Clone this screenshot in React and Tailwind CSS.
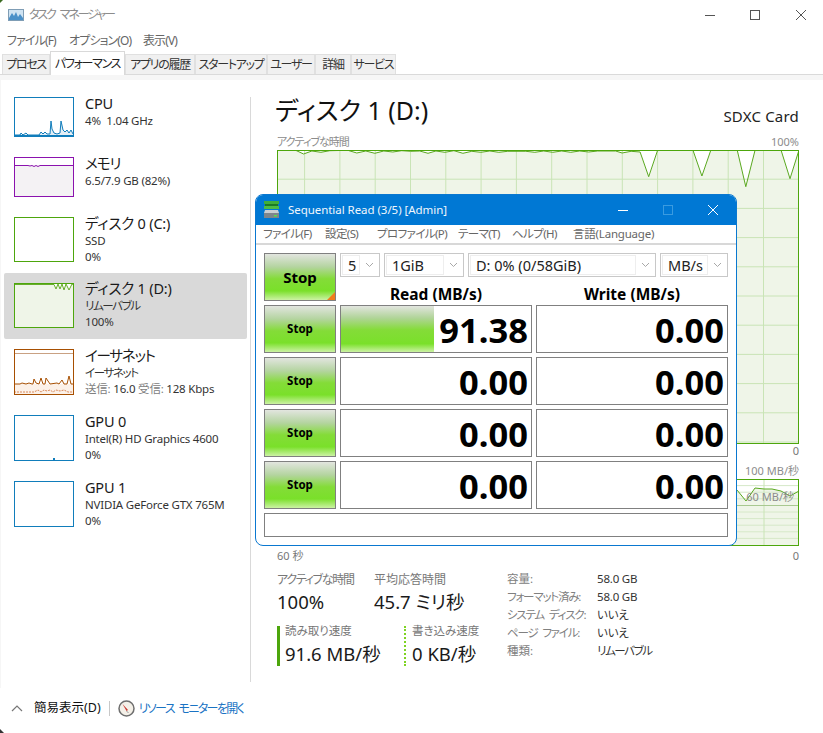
const fontCls = "font-['Noto_Sans','Noto_Sans_CJK_JP',sans-serif] [font-feature-settings:'palt']";
const stopBg = 'bg-[linear-gradient(180deg,#e2e5df_0%,#b4d4a0_28%,#84dc38_54%,#7ae02a_80%,#ccf2a4_100%)]';
const barBg = 'bg-[linear-gradient(180deg,#e2e5df_0%,#b0d498_26%,#84dc38_52%,#7ae02a_82%,#ccf2a4_100%)]';

const tabs = [
  { label: 'プロセス', w: 'w-[48px]' },
  { label: 'パフォーマンス', w: 'w-[75px]', active: true },
  { label: 'アプリの履歴', w: 'w-[70px]' },
  { label: 'スタートアップ', w: 'w-[72px]' },
  { label: 'ユーザー', w: 'w-[48px]' },
  { label: '詳細', w: 'w-[36px]' },
  { label: 'サービス', w: 'w-[45px]' },
];

const mainLine = [
  [48,180],[100,181],[122,192],[145,183],[170,187],[195,182],[245,181],[270,189],[295,183],[320,190],[345,183],[370,186],[395,182],[420,184],[445,183],[468,190],[490,183],[515,187],[540,182],[565,190],[590,184],[615,187],[640,183],[665,187],[690,184],[740,184],[765,187],[790,183],[815,187],[840,183],[865,187],[890,183],[915,186],[940,183],[990,183],[1008,189],[1033,184],[1058,186],[1082,260],[1107,180],[1205,180],[1230,258],[1255,180],[1328,180],[1352,290],[1378,180],[1450,180],[1475,266],[1500,180],
].map(([x, y]) => `${((x - 48) * 0.3595).toFixed(1)},${((y - 180) / 3).toFixed(1)}`).join(' ');

const MainGraph = () => {
  const vs = [];
  for (let x = 486.5; x > 0; x -= 35.3) vs.push(x);
  const hs = [];
  for (let y = 29.2; y < 293; y += 29.2) hs.push(y);
  return (
    <svg width="522" height="294" className="block shrink-0">
      <polygon points={`0,294 ${mainLine} 522,294`} fill="#eff5e8" />
      {vs.map(x => <line key={x} x1={x} x2={x} y1="0" y2="294" stroke="#c9e4b6" />)}
      {hs.map(y => <line key={y} x1="0" x2="522" y1={y} y2={y} stroke="#c9e4b6" />)}
      <polyline points={mainLine} fill="none" stroke="#5aa820" strokeWidth="1" />
      <rect x="0.5" y="0.5" width="521" height="293" fill="none" stroke="#4da60c" />
    </svg>
  );
};

const SpeedGraph = () => (
  <svg width="522" height="67" className="block shrink-0">
    <polygon points="440,67 460,11 469,22 478,9 487,10 495,10 504,12 513,17 522,12 522,67" fill="#eff5e8" />
    {[6.6, 13.2, 19.8, 33, 39.6, 46.2, 52.8, 59.4].map(y => <line key={y} x1="0" x2="522" y1={y} y2={y} stroke="#d6e8c8" />)}
    <line x1="487" x2="487" y1="0" y2="67" stroke="#c9e4b6" />
    <line x1="0" x2="522" y1="26.5" y2="26.5" stroke="#a8c890" />
    <polyline points="460,11 469,22 478,9 487,10 495,10 504,12 513,17 522,12" fill="none" stroke="#5aa820" />
    <rect x="0.5" y="0.5" width="521" height="66" fill="none" stroke="#4da60c" />
  </svg>
);

const Thumb = ({ h, color, children }) => (
  <svg width="60" height={h} className="block shrink-0">
    {children}
    <rect x="0.5" y="0.5" width="59" height={h - 1} fill="none" stroke={color} />
  </svg>
);

const CpuThumb = () => (
  <Thumb h={40} color="#117dbb">
    <polygon points="0,40 0,38 6,38 7,36 9,38 12,36 14,38 25,38 27,35 29,37 31,35 33,37 36,37 37,24 38,32 40,36 43,37 46,36 47,24 49,33 51,35 53,33 55,36 57,33 59,37 60,40" fill="#e3eef6" />
    <polyline points="0,38 6,38 7,36 9,38 12,36 14,38 25,38 27,35 29,37 31,35 33,37 36,37 37,24 38,32 40,36 43,37 46,36 47,24 49,33 51,35 53,33 55,36 57,33 59,37" fill="none" stroke="#117dbb" />
    <rect x="0" y="38" width="60" height="2" fill="#117dbb" />
  </Thumb>
);

const MemThumb = () => (
  <Thumb h={40} color="#8b12ae">
    <rect x="0" y="8" width="60" height="32" fill="#f4f2f4" />
    <polyline points="0,8.5 14,8.5 16,9 18,8.5 20,9.5 22,8.5 24,9.5 26,8.5 60,8.5" fill="none" stroke="#8b12ae" />
  </Thumb>
);

const DiskIdleThumb = () => <Thumb h={45} color="#4da60c" />;

const DiskBusyThumb = () => (
  <Thumb h={45} color="#4da60c">
    <rect x="0" y="0" width="60" height="45" fill="#eff5e8" />
    <polygon points="40,1 42,6 44,1 46,6 48,1 50,7 52,1 55,7 58,1" fill="#fff" />
    <polyline points="0,1.5 40,1.5 42,6 44,1 46,6 48,1 50,7 52,1 55,7 58,1 60,2" fill="none" stroke="#68ad2c" />
  </Thumb>
);

const NetThumb = () => (
  <Thumb h={46} color="#a74f01">
    <rect x="0" y="35" width="60" height="11" fill="#fcf1e8" />
    <line x1="0" x2="60" y1="4.5" y2="4.5" stroke="#c9a183" />
    <polyline points="0,35 6,35 8,34 12,35 15,34 18,35 19,35 20,30 22,34 25,35 27,29 29,35 31,35 32,29 34,32 36,35 43,34 45,35 48,31 50,35 53,35 55,27 57,35 60,35" fill="none" stroke="#a74f01" />
    <polyline points="0,43 20,43 24,41 27,43 30,41 33,42 36,41 39,43 42,41 46,42 50,41 54,43 60,43" fill="none" stroke="#d98a5c" strokeDasharray="2 1" />
  </Thumb>
);

const GpuThumb = ({ dot }) => (
  <Thumb h={46} color="#117dbb">
    {dot && <rect x="39" y="43" width="2" height="2" fill="#117dbb" />}
  </Thumb>
);

const sideItems = [
  { title: 'CPU', lines: ['4%  1.04 GHz'], thumb: <CpuThumb />, h: 'h-[60px]' },
  { title: 'メモリ', tc: 'tracking-[-1px]', lines: ['6.5/7.9 GB (82%)'], thumb: <MemThumb />, h: 'h-[60px]' },
  { title: 'ディスク 0 (C:)', lines: ['SSD', '0%'], thumb: <DiskIdleThumb />, h: 'h-[66px]' },
  { title: 'ディスク 1 (D:)', lines: ['リムーバブル', '100%'], thumb: <DiskBusyThumb />, h: 'h-[66px]', selected: true },
  { title: 'イーサネット', tc: 'tracking-[-1.2px]', lines: ['イーサネット'], net: true, thumb: <NetThumb />, h: 'h-[66px]' },
  { title: 'GPU 0', lines: ['Intel(R) HD Graphics 4600', '0%'], thumb: <GpuThumb dot />, h: 'h-[66px]' },
  { title: 'GPU 1', lines: ['NVIDIA GeForce GTX 765M', '0%'], thumb: <GpuThumb />, h: 'h-[66px]' },
];

const isKana = l => /[ァ-ヶ]/.test(l);

const SideRow = ({ item }) => (
  <div className={`ml-[3px] w-[243px] pl-[10px] pt-[10px] flex items-start gap-[11px] rounded-[2px] ${item.h} ${item.selected ? 'bg-[#d9d9d9]' : ''}`}>
    {item.thumb}
    <div className={`min-w-0 whitespace-pre ${item.selected ? '-mt-[4px]' : '-mt-[3px]'}`}>
      <div className={`text-[14.5px] leading-[19px] text-[#1a1a1a] ${item.tc || 'tracking-[-0.2px]'}`}>{item.title}</div>
      {item.lines.map(l => <div key={l} className={`text-[11.5px] leading-[15.5px] text-[#333] ${isKana(l) ? 'tracking-[-1.4px]' : 'tracking-[-0.2px]'}`}>{l}</div>)}
      {item.net && (
        <div className="text-[11.5px] leading-[15.5px] text-[#333] tracking-[-0.2px]"><span className="text-[#808080]">送信:</span> 16.0 <span className="text-[#808080]">受信:</span> 128 Kbps</div>
      )}
    </div>
  </div>
);

const Stat = ({ label, value, w, tc }) => (
  <div className={w}>
    <div className={`text-[12px] leading-[16px] text-[#777] ${tc || ''}`}>{label}</div>
    <div className="mt-[2px] text-[18.5px] leading-[24px] text-[#1a1a1a] whitespace-pre">{value}</div>
  </div>
);

const specs = [
  ['容量:', '58.0 GB'],
  ['フォーマット済み:', '58.0 GB'],
  ['システム ディスク:', 'いいえ'],
  ['ページ ファイル:', 'いいえ'],
  ['種類:', 'リムーバブル'],
];

const Combo = ({ w, text }) => (
  <div className={`${w} h-[24px] border border-[#c8c8c8] flex items-stretch p-px`}>
    <div className="flex-1 border border-[#eeeeee] pl-[5px] text-[14.5px] leading-[19px] text-[#222] whitespace-pre overflow-hidden">{text}</div>
    <div className="w-[18px] flex items-center justify-center">
      <svg width="9" height="6" viewBox="0 0 9 6"><path d="M1 1l3.5 3.5L8 1" fill="none" stroke="#a8a8a8" /></svg>
    </div>
  </div>
);

const Cell = ({ value, bar }) => (
  <div className="relative h-[48px] border border-[#808080] bg-white">
    {bar && <div className={`absolute left-0 top-0 bottom-0 ${barBg}`} style={{ width: bar }} />}
    <div className="relative pr-[3px] text-right text-[34.5px] leading-[47px] font-bold text-black">{value}</div>
  </div>
);

const StopBtn = ({ big }) => (
  <div className={`relative h-[48px] border border-[#808080] ${stopBg} flex items-center justify-center font-bold text-black ${big ? 'text-[15px]' : 'text-[11.5px]'}`}>
    Stop
    {big && <div className="absolute right-0 bottom-0 w-[8px] h-[8px] bg-[#f07c1c] [clip-path:polygon(100%_0,100%_100%,0_100%)]" />}
  </div>
);

const DiskMarkIcon = () => (
  <svg width="17" height="18" viewBox="0 0 17 18" className="shrink-0">
    <rect x="1" y="0" width="15" height="3" fill="#3fae3a" />
    <rect x="2" y="3" width="13" height="2" fill="#1c7a24" />
    <rect x="1" y="5" width="15" height="3" fill="#4dbb44" />
    <path d="M2 9h13l1 3v5H1v-5z" fill="#c9ced2" />
    <rect x="1" y="12" width="15" height="5" fill="#7e868c" />
    <rect x="11" y="14" width="3" height="1.5" fill="#56e04a" />
  </svg>
);

const DiskMark = () => {
  const rows = [['91.38', '0.00', '49%'], ['0.00', '0.00'], ['0.00', '0.00'], ['0.00', '0.00']];
  return (
    <div className="absolute left-[255px] top-[194px] w-[482px] h-[352px] border border-[#0a78d0] rounded-[8px] bg-white overflow-hidden flex flex-col">
      <div className="h-[30px] shrink-0 bg-[#0078d4] flex items-center pl-[7px] text-white">
        <DiskMarkIcon />
        <span className="ml-[8px] text-[11.5px] tracking-[-0.05px] text-[#f0f6fc]">Sequential Read (3/5) [Admin]</span>
        <svg width="100" height="12" viewBox="0 0 100 12" className="ml-auto mr-[18px]">
          <line x1="0" x2="10" y1="6.5" y2="6.5" stroke="#fff" />
          <rect x="45.5" y="1.5" width="9" height="9" fill="none" stroke="#3a9be0" />
          <path d="M90 1l10 10M100 1L90 11" stroke="#fff" fill="none" />
        </svg>
      </div>
      <div className="h-[20px] shrink-0 border-b-[2px] border-[#d8d8d8] flex items-center pl-[7px] text-[11.5px] tracking-[-0.6px] text-[#666] whitespace-pre">
        <span className="w-[62px]">ファイル(F)</span>
        <span className="w-[52px]">設定(S)</span>
        <span className="w-[81px]">プロファイル(P)</span>
        <span className="w-[54px]">テーマ(T)</span>
        <span className="w-[61px]">ヘルプ(H)</span>
        <span className="tracking-[-0.2px]">言語(Language)</span>
      </div>
      <div className="px-[8px] pt-[8px] grid grid-cols-[72px_192px_192px] gap-x-[4px] gap-y-[4px]">
        <StopBtn big />
        <div className="col-span-2 h-[48px]">
          <div className="flex gap-[4px]">
            <Combo w="w-[40px]" text="5" />
            <Combo w="w-[80px]" text="1GiB" />
            <Combo w="w-[188px]" text="D: 0% (0/58GiB)" />
            <Combo w="w-[68px]" text="MB/s" />
          </div>
          <div className="pt-[5px] h-[24px] grid grid-cols-2 gap-x-[4px] text-center text-[15.5px] leading-[24px] font-bold text-black">
            <div>Read (MB/s)</div>
            <div>Write (MB/s)</div>
          </div>
        </div>
        {rows.map(([r, w, bar], i) => (
          <div key={i} className="contents">
            <StopBtn />
            <Cell value={r} bar={bar} />
            <Cell value={w} />
          </div>
        ))}
        <div className="col-span-3 h-[24px] border border-[#808080]" />
      </div>
    </div>
  );
};

const MonitorIcon = () => (
  <svg width="17" height="17" viewBox="0 0 17 17" className="shrink-0">
    <circle cx="8.5" cy="8.5" r="7.5" fill="#f4f0e8" stroke="#6e6e6e" strokeWidth="1.5" />
    <path d="M4.5 4l5.5 6-1.5 1z" fill="#c8342c" />
    <path d="M8.5 11l2 2" stroke="#999" />
  </svg>
);

export default function App() {
  return (
    <div className={`relative w-[823px] h-[733px] overflow-hidden bg-white flex flex-col ${fontCls}`}>
      <div className="h-[30px] shrink-0 flex items-center pl-[8px]">
        <svg width="16" height="12" viewBox="0 0 16 12" className="shrink-0">
          <rect x="0.5" y="0.5" width="15" height="11" fill="#cfe3f2" stroke="#7f9db5" />
          <path d="M1 9l3-5 2 3 2-4 2 5 2-3 3 4v2H1z" fill="#4a90c8" />
        </svg>
        <span className="ml-[5px] text-[12px] tracking-[-2.1px] [word-spacing:4px] text-[#8c8c8c] whitespace-pre">タスク マネージャー</span>
        <svg width="101" height="12" viewBox="0 0 101 12" className="ml-auto mr-[17px]">
          <line x1="0" x2="10" y1="6.5" y2="6.5" stroke="#555" />
          <rect x="45.5" y="1.5" width="9" height="9" fill="none" stroke="#555" />
          <path d="M91 1l10 10M101 1L91 11" stroke="#555" fill="none" />
        </svg>
      </div>
      <div className="h-[21px] shrink-0 flex items-center pl-[7px] text-[12px] tracking-[-0.9px] text-[#666] whitespace-pre">
        <span className="w-[62px]">ファイル(F)</span>
        <span className="w-[74px]">オプション(O)</span>
        <span>表示(V)</span>
      </div>
      <div className="h-[24px] shrink-0 flex items-end pl-[2px] border-b border-[#dadada]">
        {tabs.map(t => (
          <div key={t.label} className={`${t.w} flex items-center justify-center text-[12px] tracking-[-1.3px] whitespace-pre border border-b-0 ${t.active ? 'h-[24px] -mb-px bg-white border-[#d9d9d9] text-[#222]' : 'h-[20px] bg-[#f0f0f0] border-[#e0e0e0] text-[#333]'}`}>
            {t.label}
          </div>
        ))}
      </div>
      <div className="flex-1 min-h-0 bg-[#f6f6f6] pt-[5px] pl-px">
        <div className="h-full bg-white flex">
          <div className="w-[249px] shrink-0 pt-[7px]">
            {sideItems.map(item => <SideRow key={item.title} item={item} />)}
          </div>
          <div className="w-px shrink-0 mt-[17px] mb-[6px] bg-[#d9d9d9]" />
          <div className="relative flex-1 min-w-0 pl-[26px] pr-[24px] pt-[13px] flex flex-col">
            <div className="h-[34px] shrink-0 flex items-end justify-between">
              <span className="-ml-[2px] text-[25px] leading-[34px] text-[#111] whitespace-pre">ディスク 1 (D:)</span>
              <span className="text-[15px] tracking-[0.2px] leading-[22px] text-[#222]">SDXC Card</span>
            </div>
            <div className="mt-[7px] h-[16px] shrink-0 flex justify-between text-[11px] leading-[16px] text-[#8c8c8c]">
              <span className="tracking-[-1px]">アクティブな時間</span>
              <span>100%</span>
            </div>
            <div><MainGraph /></div>
            <div className="h-[14px] shrink-0 text-right text-[11px] leading-[14px] text-[#777]">0</div>
            <div className="mt-[5px] h-[16px] shrink-0 text-right text-[11px] leading-[16px] text-[#8c8c8c]">100 MB/秒</div>
            <div className="relative">
              <SpeedGraph />
              <span className="absolute right-[5px] top-[10px] text-[11px] leading-[16px] text-[#8c8c8c]">60 MB/秒</span>
            </div>
            <div className="mt-[3px] h-[14px] shrink-0 flex justify-between text-[11px] leading-[14px] text-[#777]">
              <span>60 秒</span>
              <span>0</span>
            </div>
            <div className="mt-[9px] flex">
              <div className="w-[230px] shrink-0">
                <div className="flex">
                  <Stat label="アクティブな時間" value="100%" w="w-[97px]" tc="tracking-[-1.3px]" />
                  <Stat label="平均応答時間" value="45.7 ミリ秒" />
                </div>
                <div className="mt-[12px] flex">
                  <div className="w-[127px] h-[40px] border-l-[3px] border-[#4da60c] pl-[5px]">
                    <div className="-mt-[3px] text-[11.5px] leading-[16px] text-[#777]">読み取り速度</div>
                    <div className="mt-[3px] text-[18.5px] leading-[24px] text-[#1a1a1a] whitespace-pre">91.6 MB/秒</div>
                  </div>
                  <div className="h-[40px] border-l-[2px] border-dotted border-[#7ed321] pl-[6px]">
                    <div className="-mt-[3px] text-[11.5px] leading-[16px] text-[#777] whitespace-pre">書き込み速度</div>
                    <div className="mt-[3px] text-[18.5px] leading-[24px] text-[#1a1a1a] whitespace-pre">0 KB/秒</div>
                  </div>
                </div>
              </div>
              <div className="-mt-[2px] grid grid-cols-[90px_auto] auto-rows-[18px] text-[11.5px] leading-[18px] self-start">
                {specs.map(([k, v]) => (
                  <div key={k} className="contents">
                    <div className={`text-[#808080] whitespace-pre [word-spacing:3px] ${isKana(k) ? 'tracking-[-1.2px]' : ''}`}>{k}</div>
                    <div className={`text-[#333] ${isKana(v) ? 'tracking-[-1.4px]' : 'tracking-[-0.2px]'}`}>{v}</div>
                  </div>
                ))}
              </div>
            </div>
          </div>
        </div>
      </div>
      <div className="h-[45px] shrink-0 flex items-center pl-[11px] pb-[4px]">
        <svg width="12" height="7" viewBox="0 0 12 7" className="shrink-0"><path d="M1 6l5-5 5 5" fill="none" stroke="#777" strokeWidth="1.2" /></svg>
        <span className="ml-[11px] text-[12.5px] text-[#111]">簡易表示(D)</span>
        <div className="ml-[8px] w-px h-[15px] bg-[#c8c8c8]" />
        <div className="ml-[8px]"><MonitorIcon /></div>
        <span className="ml-[4px] text-[12px] tracking-[-1.6px] [word-spacing:3px] text-[#1a73c4] whitespace-pre">リソース モニターを開く</span>
      </div>
      <DiskMark />
      <div className="absolute left-0 bottom-0 w-[4px] h-[4px] bg-[#333] [clip-path:polygon(0_0,100%_100%,0_100%)]" />
      <div className="absolute left-0 top-0 w-[3px] h-[3px] bg-[#3a6a20] [clip-path:polygon(0_0,100%_0,0_100%)]" />
    </div>
  );
}
